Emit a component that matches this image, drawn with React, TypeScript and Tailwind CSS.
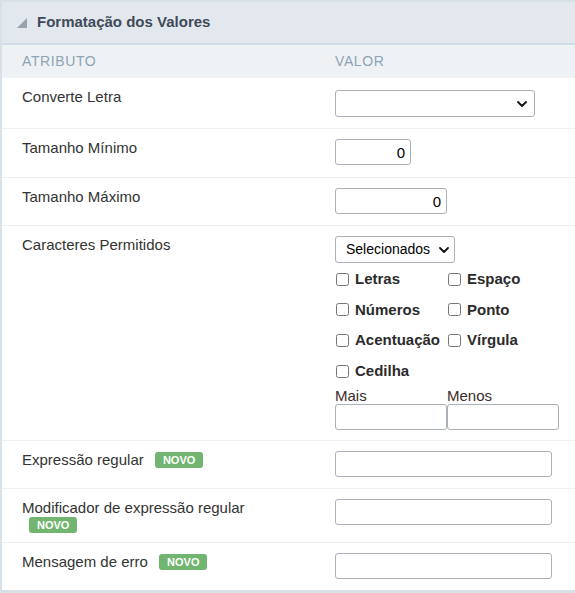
import { useState } from "react";

const font = { fontFamily: '"Liberation Sans", Arial, sans-serif' };

const Badge = () => (
  <span className="ml-[7px] inline-block h-[16px] rounded-[3px] bg-[#71b570] px-[8px] align-[1px] text-[11px] font-bold leading-[16px] text-white">
    NOVO
  </span>
);

const ChevronDown = ({ className = "" }: { className?: string }) => (
  <svg viewBox="0 0 10 6" className={className} fill="none">
    <path d="M1 1l4 4 4-4" stroke="#111" strokeWidth="1.8" strokeLinecap="round" strokeLinejoin="round" />
  </svg>
);

const Check = ({ label }: { label: string }) => (
  <label className="flex h-[30.67px] items-center gap-[6px] text-[15px] font-bold text-[#2b2b2b]">
    <input type="checkbox" className="m-0 ml-[1px] h-[13px] w-[13px]" />
    <span>{label}</span>
  </label>
);

const Row = ({
  label,
  h,
  first,
  children,
}: {
  label: React.ReactNode;
  h: string;
  first?: boolean;
  children: React.ReactNode;
}) => (
  <div className={`flex ${h} ${first ? "" : "border-t border-[#eef1f4]"} bg-white`}>
    <div className="w-[333px] shrink-0 pl-[20px] pr-[70px] pt-[10px] text-[15px] leading-[17px] text-[#333]">
      {label}
    </div>
    <div className="pt-[10px]">{children}</div>
  </div>
);

const inputCls =
  "h-[26px] rounded-[3px] border border-[#aab1b9] bg-white px-[5px] text-[15px] text-black outline-none";

export default function App() {
  const [conv, setConv] = useState("");
  return (
    <div style={font} className="h-[593px] w-[575px] overflow-hidden bg-white">
      <div className="border-b-[3px] border-l-2 border-t-2 border-[#d9e1e8]">
        {/* header */}
        <div className="flex h-[41px] items-center gap-[10px] bg-[#e3e8ee] pl-[15px]">
          <svg viewBox="0 0 10 10" className="h-[10px] w-[10px]">
            <polygon points="10,0 10,10 0,10" fill="#98a2ad" />
          </svg>
          <span className="text-[15px] font-bold text-[#3f4a58]">Formatação dos Valores</span>
        </div>
        <div className="h-[2px] bg-[#d3dce4]" />
        {/* column titles */}
        <div className="flex h-[33px] items-center bg-[#eef2f5] text-[14px] tracking-[0.6px] text-[#8fa3b4]">
          <div className="w-[333px] pl-[20px]">ATRIBUTO</div>
          <div>VALOR</div>
        </div>

        <Row label="Converte Letra" h="h-[50px]" first>
          <div className="relative mt-[2px] w-[200px]">
            <select
              value={conv}
              onChange={(e) => setConv(e.target.value)}
              className="h-[27px] w-full appearance-none rounded-[3px] border border-[#aab1b9] bg-white px-[8px] text-[15px] text-black outline-none"
            >
              <option value=""></option>
              <option value="upper">Maiúsculas</option>
              <option value="lower">Minúsculas</option>
            </select>
            <ChevronDown className="pointer-events-none absolute right-[8px] top-[11px] h-[6px] w-[10px]" />
          </div>
        </Row>

        <Row label="Tamanho Mínimo" h="h-[49px]">
          <input defaultValue="0" className={`${inputCls} w-[76px] text-right`} />
        </Row>

        <Row label="Tamanho Máximo" h="h-[48px]">
          <input defaultValue="0" className={`${inputCls} w-[112px] text-right`} />
        </Row>

        <Row label="Caracteres Permitidos" h="h-[215px]">
          <div className="relative w-[120px]">
            <select
              defaultValue="sel"
              className="h-[27px] w-full appearance-none rounded-[3px] border border-[#aab1b9] bg-white pl-[10px] text-[14px] text-black outline-none"
            >
              <option value="sel">Selecionados</option>
              <option value="all">Todos</option>
            </select>
            <ChevronDown className="pointer-events-none absolute right-[6px] top-[11px] h-[6px] w-[10px]" />
          </div>
          <div className="mt-[1px] grid w-[224px] grid-cols-[112px_112px]">
            <Check label="Letras" />
            <Check label="Espaço" />
            <Check label="Números" />
            <Check label="Ponto" />
            <Check label="Acentuação" />
            <Check label="Vírgula" />
            <Check label="Cedilha" />
            <div />
            <span className="mt-[1px] text-[15px] leading-[16px] text-[#3b2b2b]">Mais</span>
            <span className="mt-[1px] text-[15px] leading-[16px] text-[#3b2b2b]">Menos</span>
            <input className={`${inputCls} w-[112px]`} />
            <input className={`${inputCls} w-[112px]`} />
          </div>
        </Row>

        <Row
          label={
            <>
              Expressão regular <Badge />
            </>
          }
          h="h-[48px]"
        >
          <input className={`${inputCls} w-[217px]`} />
        </Row>

        <Row
          label={
            <>
              Modificador de expressão regular <Badge />
            </>
          }
          h="h-[54px]"
        >
          <input className={`${inputCls} w-[217px]`} />
        </Row>

        <Row
          label={
            <>
              Mensagem de erro <Badge />
            </>
          }
          h="h-[48px]"
        >
          <input className={`${inputCls} w-[217px]`} />
        </Row>
      </div>
    </div>
  );
}
